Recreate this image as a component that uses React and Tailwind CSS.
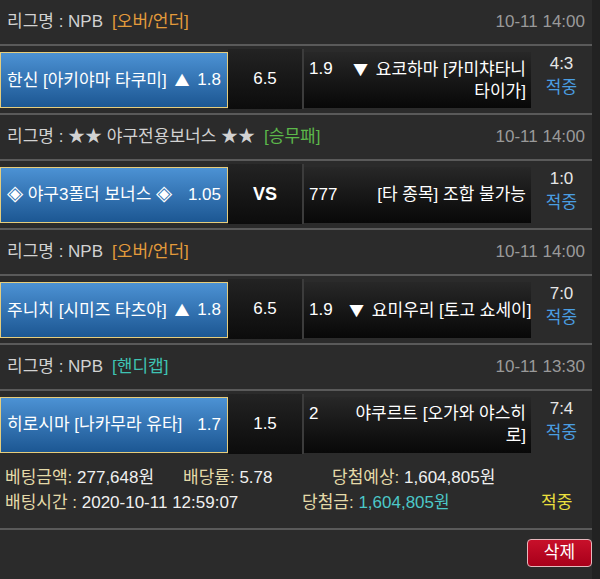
import React from "react";

const sections = [
  {
    league: "NPB",
    type: "[오버/언더]",
    typeColor: "text-[#e39b3b]",
    date: "10-11 14:00",
    home: "한신 [아키야마 타쿠미] ▲",
    homeOdds: "1.8",
    mid: "6.5",
    awayOdds: "1.9",
    awayLines: ["▼ 요코하마 [카미챠타니", "타이가]"],
    score: "4:3",
  },
  {
    league: "★★ 야구전용보너스 ★★",
    type: "[승무패]",
    typeColor: "text-[#5cb84a]",
    date: "10-11 14:00",
    home: "◈ 야구3폴더 보너스 ◈",
    homeOdds: "1.05",
    mid: "VS",
    bold: true,
    awayOdds: "777",
    awayLines: ["[타 종목] 조합 불가능"],
    score: "1:0",
  },
  {
    league: "NPB",
    type: "[오버/언더]",
    typeColor: "text-[#e39b3b]",
    date: "10-11 14:00",
    home: "주니치 [시미즈 타츠야] ▲",
    homeOdds: "1.8",
    mid: "6.5",
    awayOdds: "1.9",
    awayLines: ["▼ 요미우리 [토고 쇼세이]"],
    score: "7:0",
  },
  {
    league: "NPB",
    type: "[핸디캡]",
    typeColor: "text-[#3fc3b3]",
    date: "10-11 13:30",
    home: "히로시마 [나카무라 유타]",
    homeOdds: "1.7",
    mid: "1.5",
    awayOdds: "2",
    awayLines: ["야쿠르트 [오가와 야스히", "로]"],
    score: "7:4",
  },
];

function Sym({ text }) {
  const parts = text.split(/([▲▼◈])/);
  return (
    <>
      {parts.map((p, i) => {
        if (p === "▲")
          return (
            <span key={i} className="font-['Noto_Sans_CJK_KR'] text-[15px] ml-[3px]">
              ▲
            </span>
          );
        if (p === "▼")
          return (
            <span key={i} className="font-['Noto_Sans_CJK_KR'] text-[15px] mr-[3px]">
              ▼
            </span>
          );
        if (p === "◈")
          return (
            <span key={i} className="font-['Noto_Sans_CJK_KR'] text-[21px] leading-[0]">
              ◈
            </span>
          );
        return <React.Fragment key={i}>{p}</React.Fragment>;
      })}
    </>
  );
}

function Section({ s, last }) {
  return (
    <div className="flex flex-col">
      <div className="h-[44px] flex items-center justify-between px-[7px]">
        <div className="text-[#d2d2d2] flex items-center">
          <span>리그명 : {s.league}</span>
          <span className={`ml-[9px] ${s.typeColor}`}>{s.type}</span>
        </div>
        <div className="text-[#9a9a9a]">{s.date}</div>
      </div>
      <div className="h-[2px] bg-[#5a5a5a]" />
      <div className="h-[67px] flex items-start pt-[6px]">
        <div className="w-[228px] h-[56px] shrink-0 border border-[#e6cd7c] bg-gradient-to-b from-[#4c92d4] to-[#1c5793] flex items-center justify-between px-[6px] text-white whitespace-nowrap">
          <span>
            <Sym text={s.home} />
          </span>
          <span>{s.homeOdds}</span>
        </div>
        <div className="w-[74px] h-[60px] -mt-[3px] shrink-0 bg-gradient-to-b from-[#232323] to-[#0c0c0c] flex items-center justify-center text-white">
          <span className={s.bold ? "font-bold text-[18px]" : ""}>{s.mid}</span>
        </div>
        <div className="w-[2px] h-[60px] -mt-[3px] shrink-0 bg-[#3c3c3c]" />
        <div className="w-[227px] h-[56px] shrink-0 bg-gradient-to-b from-[#282828] to-[#080808] flex items-center pl-[5px] pr-[5px] text-white">
          <div className="flex w-full items-start">
            <span className="shrink-0 w-[40px]">{s.awayOdds}</span>
            <div className="flex-1 text-right whitespace-nowrap">
              {s.awayLines.map((l, i) => (
                <div key={i}>
                  <Sym text={l} />
                </div>
              ))}
            </div>
          </div>
        </div>
        <div className="flex-1 h-[56px] flex flex-col items-center justify-center pb-[8px] leading-[24px]">
          <span className="text-[#e6e6e6]">{s.score}</span>
          <span className="text-[#4a9ee2]">적중</span>
        </div>
      </div>
      {!last && <div className="h-[2px] bg-[#5a5a5a]" />}
    </div>
  );
}

export default function App() {
  return (
    <div
      className="w-[600px] h-[579px] bg-[#2b2b2b] flex overflow-hidden text-[17px] leading-[22px]"
      style={{ fontFamily: '"Liberation Sans", "Noto Sans CJK KR", sans-serif' }}
    >
      <div className="w-[592px] flex flex-col">
        {sections.map((s, i) => (
          <Section key={i} s={s} last={i === sections.length - 1} />
        ))}
        <div className="pt-[7px] pb-[13px] leading-[25px]">
          <div className="flex">
            <span className="w-[183px] pl-[5px] whitespace-nowrap">
              <span className="text-[#e4daa8]">베팅금액: </span>
              <span className="text-[#f0f0f0]">277,648원</span>
            </span>
            <span className="w-[149px] whitespace-nowrap">
              <span className="text-[#e4daa8]">배당률: </span>
              <span className="text-[#f0f0f0]">5.78</span>
            </span>
            <span className="whitespace-nowrap">
              <span className="text-[#e4daa8]">당첨예상: </span>
              <span className="text-[#f0f0f0]">1,604,805원</span>
            </span>
          </div>
          <div className="flex">
            <span className="w-[302px] pl-[5px] whitespace-nowrap">
              <span className="text-[#e4daa8]">배팅시간 : </span>
              <span className="text-[#f0f0f0]">2020-10-11 12:59:07</span>
            </span>
            <span className="w-[239px] whitespace-nowrap">
              <span className="text-[#e4daa8]">당첨금: </span>
              <span className="text-[#4cc8c8]">1,604,805원</span>
            </span>
            <span className="text-[#ece03e]">적중</span>
          </div>
        </div>
        <div className="h-[2px] bg-[#5a5a5a]" />
        <div className="flex justify-end pt-[9px]">
          <button className="w-[65px] h-[28px] rounded-[4px] border border-[#e7b8bd] bg-gradient-to-b from-[#c8102a] to-[#a8001a] text-white text-[17px] flex items-center justify-center">
            삭제
          </button>
        </div>
      </div>
      <div className="w-[8px] bg-[#222222]" />
    </div>
  );
}
